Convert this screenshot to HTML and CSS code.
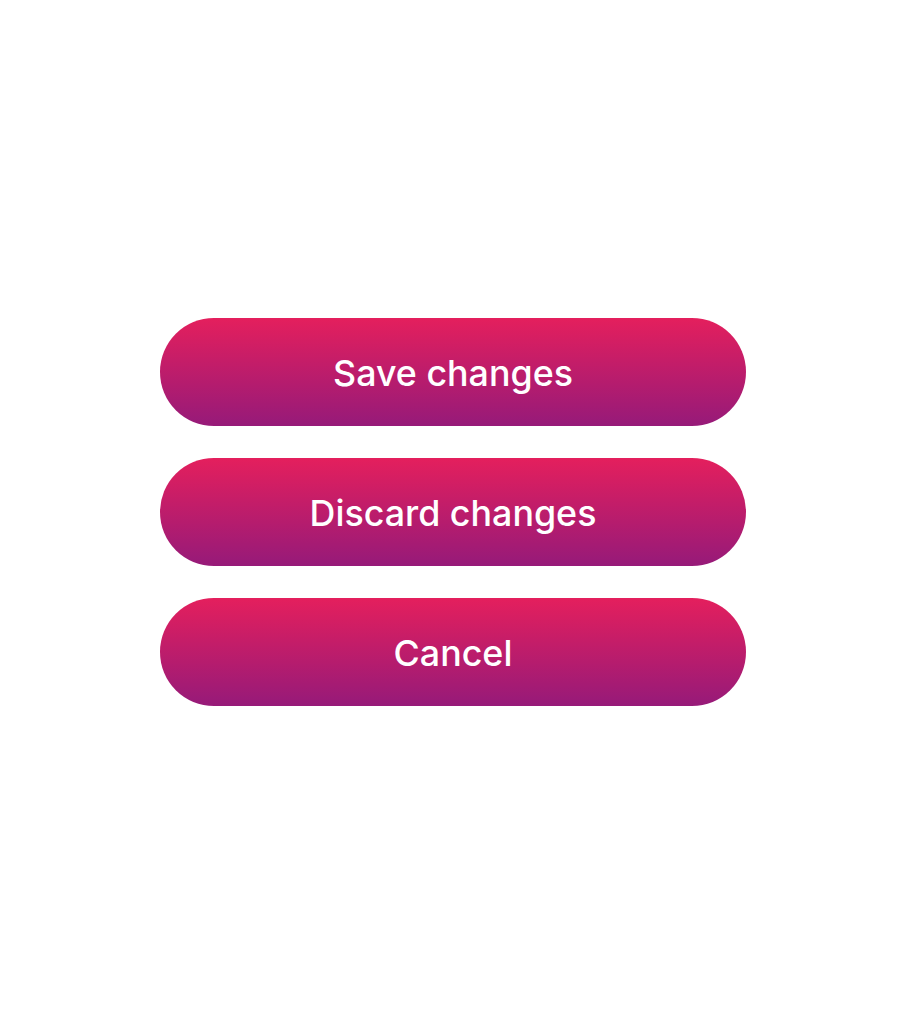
FILE: index.html
```html
<!DOCTYPE html>
<html lang="en">
<head>
    <meta charset="UTF-8">
    <title>Unsaved changes</title>
    <meta name="viewport" content="width=device-width, initial-scale=1.0">
    <link rel="stylesheet" href="styles.css">
</head>
<body>
    <div class="actions">
        <button class="pill-button">Save changes</button>
        <button class="pill-button">Discard changes</button>
        <button class="pill-button">Cancel</button>
    </div>
</body>
</html>
```

FILE: styles.css
```css
/* Palette */
:root {
    --pill-top: #e41f5d;
    --pill-bottom: #961a79;
    --pill-text: #ffffff;
}

html, body {
    height: 100%;
}

body {
    margin: 0;
    background: #ffffff;
    font-family: 'Inter', 'Noto Sans', sans-serif;
    display: flex;
    align-items: center;
    justify-content: center;
}

/* Stack of action buttons */
.actions {
    display: flex;
    flex-direction: column;
    gap: 32px;
    width: 586px;
}

.pill-button {
    height: 108px;
    border: none;
    border-radius: 54px;
    background: linear-gradient(180deg, var(--pill-top), var(--pill-bottom));
    color: var(--pill-text);
    font-family: inherit;
    font-size: 35.8px;
    font-weight: 500;
    cursor: pointer;
    padding: 2px 0 0;
}
```
